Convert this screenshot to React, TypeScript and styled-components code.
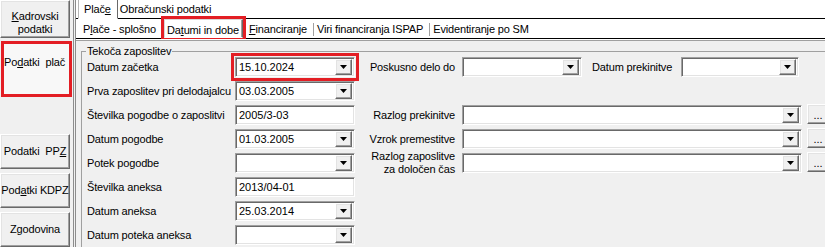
import styled, { createGlobalStyle, css } from 'styled-components';

const GlobalStyle = createGlobalStyle`
  html, body {
    margin: 0;
    padding: 0;
    background: #f0f0f0;
    overflow: hidden;
  }
  body {
    font-family: "Liberation Sans", Arial, sans-serif;
    font-size: 11px;
    color: #000;
  }
`;

const HIGHLIGHT = '#e31e24';

// classic 3D borders
const raised = css`
  background: #f0f0f0;
  border: 1px solid;
  border-color: #fff #696969 #696969 #fff;
  box-shadow: inset -1px -1px 0 #a0a0a0, inset 1px 1px 0 #e3e3e3;
`;

const sunken = css`
  background: #fff;
  border: 1px solid;
  border-color: #a0a0a0 #fff #fff #a0a0a0;
  box-shadow: inset 1px 1px 0 #696969, inset -1px -1px 0 #e3e3e3;
`;

const Page = styled.div`
  display: flex;
  width: 860px;
  height: 247px;
  overflow: hidden;
  background: #f0f0f0;
  letter-spacing: -0.15px;
`;

// Left navigation
const SideNav = styled.nav`
  width: 73px;
  flex: none;
  display: flex;
  flex-direction: column;
`;

const NavButton = styled.div<{ $height: number; $top?: number; $padTop?: number }>`
  ${raised}
  box-sizing: border-box;
  flex: none;
  width: 70px;
  height: ${(p) => p.$height}px;
  margin-top: ${(p) => p.$top ?? 0}px;
  padding-top: ${(p) => p.$padTop ?? 0}px;
  display: flex;
  align-items: center;
  justify-content: center;
  text-align: center;
  line-height: 13px;
  white-space: pre;
`;

const NavSelected = styled.div`
  box-sizing: border-box;
  flex: none;
  width: 65px;
  height: 50px;
  margin: 6px 0 0 4px;
  padding: 12px 5px 0 0;
  background: #f8f8f8;
  outline: 3px solid ${HIGHLIGHT};
  text-align: center;
  line-height: 13px;
  white-space: pre;
`;

const U = styled.span`
  text-decoration: underline;
`;

// Main tab area
const Main = styled.div`
  flex: 1;
  display: flex;
  flex-direction: column;
  border-left: 3px double #8c8c8c;
`;

const TopTabs = styled.div`
  display: flex;
  height: 19px;
  background: #fff;
`;

const TopTab = styled.div<{ $active?: boolean; $grow?: boolean; $pl?: number; $pr?: number }>`
  box-sizing: border-box;
  height: 19px;
  line-height: 18px;
  padding: 0 ${(p) => p.$pr ?? 0}px 0 ${(p) => p.$pl ?? 0}px;
  flex: ${(p) => (p.$grow ? 1 : 'none')};
  white-space: nowrap;
  border-bottom: 1px solid ${(p) => (p.$active ? 'transparent' : '#000')};
  ${(p) =>
    p.$active &&
    css`
      border-left: 1px solid #b4b4b4;
      border-right: 1px solid #696969;
    `}
`;

const SubTabs = styled.div`
  display: flex;
  align-items: flex-end;
  box-sizing: border-box;
  height: 24px;
  padding-left: 4px;
  background: #fff;
  border-bottom: 1px solid #000;
`;

const SubTab = styled.div<{ $sep?: boolean }>`
  height: 13px;
  line-height: 13px;
  margin-bottom: 2px;
  padding: 0 6px 0 3px;
  white-space: nowrap;
  border-right: 1px solid ${(p) => (p.$sep ? '#a0a0a0' : 'transparent')};
`;

const SubTabActive = styled.div`
  box-sizing: border-box;
  height: 19px;
  line-height: 13px;
  margin: 0 3px 0 1px;
  padding: 4px 3px 0 2px;
  white-space: nowrap;
  background: #fff;
  border: 1px solid;
  border-color: #d8d8d8 #696969 transparent #d8d8d8;
  box-shadow: inset -1px 0 0 #a0a0a0;
  outline: 3px solid ${HIGHLIGHT};
`;

const Panel = styled.div`
  flex: 1;
  padding: 5px 0 0 5px;
  border-top: 1px solid #fff;
  box-shadow: inset 0 1px 0 #a0a0a0;
`;

const GroupBox = styled.fieldset`
  margin: 0;
  padding: 0 0 0 5px;
  min-width: 0;
  height: 260px;
  border: 1px solid #a0a0a0;
`;

const Legend = styled.legend`
  padding: 0 1px;
  margin-left: -1px;
  line-height: 13px;
`;

const FormGrid = styled.div`
  display: grid;
  grid-template-columns: 148px 120px 107px 1fr;
  grid-auto-rows: 20px;
  row-gap: 4px;
  margin-top: -1px;
`;

const Label = styled.div<{ $col?: number; $row: number }>`
  grid-column: ${(p) => p.$col ?? 1};
  grid-row: ${(p) => p.$row};
  align-self: center;
  line-height: 13px;
  white-space: nowrap;
`;

const RightLabel = styled(Label)`
  justify-self: end;
  padding-right: 7px;
  text-align: right;
`;

const Cell = styled.div<{ $col: number; $row: number }>`
  grid-column: ${(p) => p.$col};
  grid-row: ${(p) => p.$row};
  display: flex;
  align-items: center;
`;

const Field = styled.div<{ $width: number; $highlight?: boolean }>`
  ${sunken}
  box-sizing: border-box;
  width: ${(p) => p.$width}px;
  height: 20px;
  flex: none;
  display: flex;
  align-items: center;
  padding: 0 2px 0 3px;
  white-space: nowrap;
  line-height: 13px;
  letter-spacing: 0;
  ${(p) =>
    p.$highlight &&
    css`
      outline: 3px solid ${HIGHLIGHT};
      outline-offset: 1px;
    `}
`;

const Value = styled.span`
  flex: 1;
`;

const DropButton = styled.div`
  ${raised}
  box-sizing: border-box;
  width: 17px;
  height: 16px;
  display: flex;
  align-items: center;
  justify-content: center;
`;

const DotsButton = styled.div`
  ${raised}
  box-sizing: border-box;
  width: 22px;
  height: 20px;
  margin: -2px 0 0 5px;
  flex: none;
  display: flex;
  align-items: flex-end;
  justify-content: center;
  padding-bottom: 3px;
  line-height: 10px;
  letter-spacing: 0;
`;

const InlineLabel = styled.span`
  margin: 0 9px 0 10px;
  white-space: nowrap;
`;

const Arrow = () => (
  <svg width="7" height="4" viewBox="0 0 7 4">
    <path d="M0 0H7L3.5 4Z" fill="#000" />
  </svg>
);

const Combo = ({ width, value, highlight }: { width: number; value?: string; highlight?: boolean }) => (
  <Field $width={width} $highlight={highlight}>
    <Value>{value}</Value>
    <DropButton>
      <Arrow />
    </DropButton>
  </Field>
);

const leftRows: { label: string; value?: string; combo: boolean; highlight?: boolean }[] = [
  { label: 'Datum začetka', value: '15.10.2024', combo: true, highlight: true },
  { label: 'Prva zaposlitev pri delodajalcu', value: '03.03.2005', combo: true },
  { label: 'Številka pogodbe o zaposlitvi', value: '2005/3-03', combo: false },
  { label: 'Datum pogodbe', value: '01.03.2005', combo: true },
  { label: 'Potek pogodbe', combo: true },
  { label: 'Številka aneksa', value: '2013/04-01', combo: false },
  { label: 'Datum aneksa', value: '25.03.2014', combo: true },
  { label: 'Datum poteka aneksa', combo: true },
];

const rightRows: { row: number; label: string[] }[] = [
  { row: 3, label: ['Razlog prekinitve'] },
  { row: 4, label: ['Vzrok premestitve'] },
  { row: 5, label: ['Razlog zaposlitve', 'za določen čas'] },
];

export default function App() {
  return (
    <>
      <GlobalStyle />
      <Page>
        <SideNav>
          <NavButton $height={38} $padTop={7}>
            <span>
              <U>K</U>adrovski
              <br />
              podatki
            </span>
          </NavButton>
          <NavSelected>
            Po<U>d</U>atki  plač
          </NavSelected>
          <NavButton $height={35} $top={40}>
            Podatki  PP<U>Z</U>
          </NavButton>
          <NavButton $height={35} $top={4}>
            Pod<U>a</U>tki KDPZ
          </NavButton>
          <NavButton $height={35} $top={4}>
            Zgodovina
          </NavButton>
        </SideNav>

        <Main>
          <TopTabs>
            <TopTab $pl={2} />
            <TopTab $active $pl={5} $pr={6}>
              Plač<U>e</U>
            </TopTab>
            <TopTab $pl={2} $grow>
              Obračunski podatki
            </TopTab>
          </TopTabs>

          <SubTabs>
            <SubTab>
              P<U>l</U>ače - splošno
            </SubTab>
            <SubTabActive>
              Da<U>t</U>umi in dobe
            </SubTabActive>
            <SubTab $sep>
              <U>F</U>inanciranje
            </SubTab>
            <SubTab $sep>Viri financiranja ISPAP</SubTab>
            <SubTab>Evidentiranje po SM</SubTab>
          </SubTabs>

          <Panel>
            <GroupBox>
              <Legend>Tekoča zaposlitev</Legend>
              <FormGrid>
                {leftRows.map((r, i) => (
                  <>
                    <Label key={`l${i}`} $row={i + 1}>
                      {r.label}
                    </Label>
                    <Cell key={`f${i}`} $col={2} $row={i + 1}>
                      {r.combo ? (
                        <Combo width={120} value={r.value} highlight={r.highlight} />
                      ) : (
                        <Field $width={120}>{r.value}</Field>
                      )}
                    </Cell>
                  </>
                ))}

                <RightLabel $col={3} $row={1}>
                  Poskusno delo do
                </RightLabel>
                <Cell $col={4} $row={1}>
                  <Combo width={120} />
                  <InlineLabel>Datum prekinitve</InlineLabel>
                  <Combo width={118} />
                </Cell>

                {rightRows.map((r) => (
                  <>
                    <RightLabel key={`rl${r.row}`} $col={3} $row={r.row}>
                      {r.label.map((line, j) => (
                        <div key={j}>{line}</div>
                      ))}
                    </RightLabel>
                    <Cell key={`rf${r.row}`} $col={4} $row={r.row}>
                      <Combo width={340} />
                      <DotsButton>...</DotsButton>
                    </Cell>
                  </>
                ))}
              </FormGrid>
            </GroupBox>
          </Panel>
        </Main>
      </Page>
    </>
  );
}
